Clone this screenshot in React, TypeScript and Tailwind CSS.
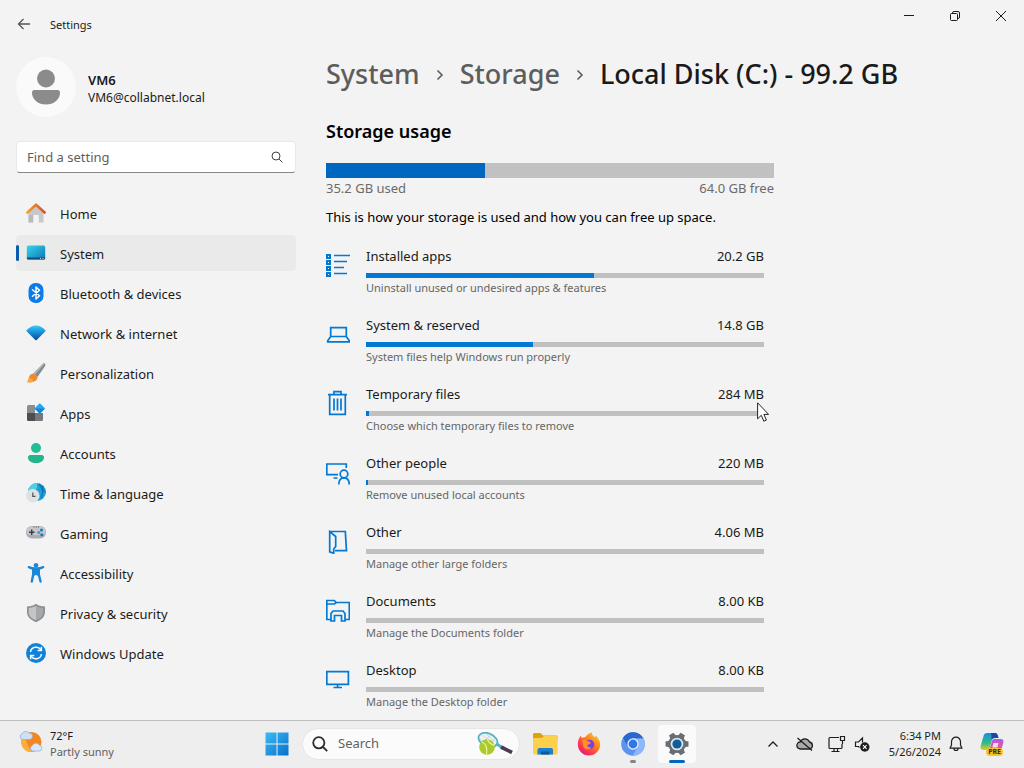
import type { ReactNode } from "react";

const ink = "#0078d4";

function HomeIcon() {
  return (
    <svg viewBox="0 0 20 20" className="size-5">
      <path d="M2.500 9L10 2l7.500 7v10.500h-4.700V12H7.200v7.500H2.500z" fill="#c8c8ca" />
      <path d="M2.500 12h4.700v7.500H2.500z" fill="#b0b0b3" opacity=".6" />
      <path d="M1.400 9.500L10 1.700l8.600 7.800" fill="none" stroke="url(#roof)" strokeWidth="2.600" strokeLinecap="round" strokeLinejoin="round" />
      <defs>
        <linearGradient id="roof"><stop stopColor="#f0a030" /><stop offset="1" stopColor="#d5532a" /></linearGradient>
      </defs>
    </svg>
  );
}
function SystemIcon() {
  return (
    <svg viewBox="0 0 20 20" className="size-5">
      <defs>
        <linearGradient id="scr" x2="1" y2="1"><stop stopColor="#38d5ea" /><stop offset="1" stopColor="#0b76b8" /></linearGradient>
      </defs>
      <rect x=".8" y="2.500" width="18.400" height="14" rx="1.500" fill="url(#scr)" />
      <path d="M.8 14.500h18.400V15a1.500 1.500 0 0 1-1.500 1.500H2.300A1.500 1.500 0 0 1 .8 15z" fill="#0a4f80" />
      <path d="M14 15.500h1M16.500 15.500h1" stroke="#fff" strokeWidth=".8" />
    </svg>
  );
}
function BluetoothIcon() {
  return (
    <svg viewBox="0 0 20 20" className="size-5">
      <rect x="2.500" width="15" height="20" rx="7" fill="#0a7bea" />
      <path d="M6.500 6.800l7 6-3.500 3.200V4l3.500 3.200-7 6" fill="none" stroke="#fff" strokeWidth="1.500" strokeLinejoin="round" strokeLinecap="round" />
    </svg>
  );
}
function NetworkIcon() {
  return (
    <svg viewBox="0 0 20 20" className="size-5">
      <defs>
        <linearGradient id="net" x2="0" y2="1"><stop stopColor="#3ccbf4" /><stop offset=".45" stopColor="#1690dc" /><stop offset="1" stopColor="#0a4a98" /></linearGradient>
      </defs>
      <path d="M.6 6.200C6-.1 14-.1 19.400 6.200c.4.400.3.800 0 1.100L10.700 16c-.5.400-.9.400-1.400 0L.6 7.300c-.3-.3-.4-.7 0-1.100z" transform="translate(0 1)" fill="url(#net)" />
    </svg>
  );
}
function BrushIcon() {
  return (
    <svg viewBox="0 0 20 20" className="size-5">
      <path d="M18.800.6c.9.700.7 1.800.1 2.700L11.500 14 7.300 10.600 16.600 1c.7-.6 1.500-.9 2.200-.4z" fill="#858a90" />
      <path d="M18.800.6L8.800 11.800 7.300 10.600 16.600 1c.7-.6 1.500-.9 2.200-.4z" fill="#b4b8bc" />
      <path d="M7.300 10.600l4.200 3.400c0 4.200-5.300 6.300-10.700 5 1.700-1.300 1.500-2.300 2-4.200.5-2.400 2.300-4 4.500-4.200z" fill="#f08a24" />
      <path d="M3 14c-.3 2-.5 3.500-2.200 5 3 .6 5.500.1 7.300-1z" fill="#f9a842" />
    </svg>
  );
}
function AppsIcon() {
  return (
    <svg viewBox="0 0 20 20" className="size-5">
      <path d="M1 3.500A1.500 1.500 0 0 1 2.500 2H9v8H1z" fill="#8b8e91" />
      <path d="M1 10h8v8H2.500A1.500 1.500 0 0 1 1 16.500z" fill="#4c4e51" />
      <path d="M9 10h8v6.500a1.500 1.500 0 0 1-1.500 1.500H9z" fill="#75797c" />
      <rect x="10" y="1.600" width="7.600" height="7.600" rx="1" transform="rotate(45 13.800 5.400)" fill="#28a8ea" />
      <path d="M13.800 5.400h5.300l-5.300 5.300-5.300-5.300z" fill="#1785d1" />
    </svg>
  );
}
function AccountsIcon() {
  return (
    <svg viewBox="0 0 20 20" className="size-5">
      <circle cx="10" cy="5" r="5" fill="#21bd94" />
      <path d="M4.500 12h11a2.500 2.500 0 0 1 2.500 2.500C18 18 14.500 20 10 20s-8-2-8-5.500A2.500 2.500 0 0 1 4.500 12z" fill="#22b48d" />
    </svg>
  );
}
function TimeIcon() {
  return (
    <svg viewBox="0 0 20 20" className="size-5">
      <circle cx="11" cy="9" r="9" fill="#1f9fd8" />
      <path d="M11 0a9 9 0 0 0-9 8c3 1 5-1 6.500-1S12 5 11 0z" fill="#55cfe0" />
      <path d="M13 1c3 3 5 8 2 14M17 3c-1 3 1 6 2.500 6" fill="none" stroke="#0d72b5" strokeWidth="1.200" />
      <circle cx="6.800" cy="12.800" r="6.800" fill="#dfe2e4" />
      <path d="M6.800 9.500v3.800h2.700" fill="none" stroke="#4d5357" strokeWidth="1.200" />
    </svg>
  );
}
function GamingIcon() {
  return (
    <svg viewBox="0 0 20 20" className="size-5">
      <rect y="3" width="20" height="12.500" rx="6" fill="#a9adb4" />
      <rect x=".5" y="3.500" width="19" height="8.500" rx="4" fill="#c4c7cc" />
      <path d="M3 9.200h5.500M5.700 6.500V12" stroke="#3a3e43" strokeWidth="1.500" />
      <circle cx="15.500" cy="7" r="1.500" fill="#1878b8" /><circle cx="12.800" cy="9.400" r="1.500" fill="#3f97cc" /><circle cx="15.800" cy="11.800" r="1.500" fill="#1878b8" />
      <path d="M7.500 4h1M9.700 4h1M12 4h1" stroke="#53575c" strokeWidth="1" />
    </svg>
  );
}
function AccessIcon() {
  return (
    <svg viewBox="0 0 20 20" className="size-5">
      <circle cx="10" cy="2.300" r="2.300" fill="#1a87d7" />
      <path d="M2.800 4.200L8 6h4l5.200-1.800M10 6v5" fill="none" stroke="#1a87d7" strokeWidth="2.400" strokeLinecap="round" strokeLinejoin="round" />
      <path d="M7.200 5.500h5.600v6L14.600 18.500M7.200 5.500v6L5.800 18.500" fill="none" stroke="#1a87d7" strokeWidth="2.400" strokeLinecap="round" />
      <path d="M7 5h6v8h-1L10 11.500 8 13H7z" fill="#1a87d7" />
    </svg>
  );
}
function ShieldIcon() {
  return (
    <svg viewBox="0 0 20 20" className="size-5">
      <path d="M10 .8c2.500 2 5.300 2.700 9 2.800v5.200c0 5-3.500 8.300-9 10.400-5.500-2.100-9-5.400-9-10.400V3.600C4.700 3.500 7.500 2.800 10 .8z" fill="#8c8f92" />
      <path d="M10 2.800c2.100 1.400 4.500 2 7.300 2.200v4c0 3.900-2.700 6.500-7.300 8.300z" fill="#a5a7aa" />
      <path d="M10 2.800C7.900 4.200 5.500 4.800 2.700 5v4c0 3.900 2.700 6.500 7.300 8.300z" fill="#c3c5c7" />
    </svg>
  );
}
function UpdateIcon() {
  return (
    <svg viewBox="0 0 20 20" className="size-5">
      <circle cx="10" cy="10" r="10" fill="#0d82d8" />
      <path d="M4.500 9a5.700 5.700 0 0 1 10.300-2.400M15.500 11a5.700 5.700 0 0 1-10.300 2.400" fill="none" stroke="#fff" strokeWidth="1.500" />
      <path d="M15.400 3.800v3.700h-3.700M4.600 16.200v-3.700h3.700" fill="none" stroke="#fff" strokeWidth="1.500" />
    </svg>
  );
}

function LineIcon({ children }: { children: ReactNode }) {
  return (
    <svg viewBox="0 0 24 26" className="h-[26px] w-6 shrink-0" fill="none" stroke={ink} strokeWidth="1.700">
      {children}
    </svg>
  );
}

const nav: { label: string; icon: ReactNode }[] = [
  { label: "Home", icon: <HomeIcon /> },
  { label: "System", icon: <SystemIcon /> },
  { label: "Bluetooth & devices", icon: <BluetoothIcon /> },
  { label: "Network & internet", icon: <NetworkIcon /> },
  { label: "Personalization", icon: <BrushIcon /> },
  { label: "Apps", icon: <AppsIcon /> },
  { label: "Accounts", icon: <AccountsIcon /> },
  { label: "Time & language", icon: <TimeIcon /> },
  { label: "Gaming", icon: <GamingIcon /> },
  { label: "Accessibility", icon: <AccessIcon /> },
  { label: "Privacy & security", icon: <ShieldIcon /> },
  { label: "Windows Update", icon: <UpdateIcon /> },
];

const rows: { name: string; size: string; note: string; pct: number; icon: ReactNode; pointer?: boolean }[] = [
  {
    name: "Installed apps", size: "20.2 GB", note: "Uninstall unused or undesired apps & features", pct: 57.4,
    icon: (
      <LineIcon>
        <path d="M1 3h3v3H1zM1 9h3v3H1zM1 15h3v3H1zM1 21h3v3H1z" strokeWidth="2" />
        <path d="M8 3.500h16M8 9.500h13M8 15.500h10M8 21.500h13" />
      </LineIcon>
    ),
  },
  {
    name: "System & reserved", size: "14.8 GB", note: "System files help Windows run properly", pct: 42,
    icon: <LineIcon><path d="M4.700 15.500V6.700h15.600v8.800M4.700 15.500h15.600l3 4.200v1.100H1.700v-1.100z" /></LineIcon>,
  },
  {
    name: "Temporary files", size: "284 MB", note: "Choose which temporary files to remove", pct: 0.75, pointer: true,
    icon: <LineIcon><path d="M2 4.700h19M3.700 4.700v19.600h15.600V4.700M8 4.700V1.700h7v3M8 8.500v12M11.500 8.500v12M15 8.500v12" /></LineIcon>,
  },
  {
    name: "Other people", size: "220 MB", note: "Remove unused local accounts", pct: 0.5,
    icon: <LineIcon><path d="M12 15.700H.8V5h19.500v4M7.500 19h4" /><circle cx="18" cy="15" r="3.800" /><path d="M12.800 25.500c0-4.200 2.200-6.700 5.200-6.700s5.200 2.500 5.200 6.700" /></LineIcon>,
  },
  {
    name: "Other", size: "4.06 MB", note: "Manage other large folders", pct: 0,
    icon: <LineIcon><path d="M3.700 3.500h15.600l1.200 19.200H9M3.700 3.500v20.300l4 1.500v-4.200l2-2.600V8.500z" /></LineIcon>,
  },
  {
    name: "Documents", size: "8.00 KB", note: "Manage the Documents folder", pct: 0,
    icon: <LineIcon><path d="M5 22.500H.8V3.500h7.500l2 2h13v17H19M.8 7h7.500l2-1.500" /><path d="M5 24v-7.500l2-2.500h10l2 2.500V24h-3.500v-5.500h-7V24z" /></LineIcon>,
  },
  {
    name: "Desktop", size: "8.00 KB", note: "Manage the Desktop folder", pct: 0,
    icon: <LineIcon><path d="M.8 5.700h21.600v12.600H.8zM11.600 18.300v3.200M7.500 21.500h8.500" /></LineIcon>,
  },
];

function Crumb() {
  return (
    <svg viewBox="0 0 8 12" className="mt-0.5 h-3 w-2" fill="none" stroke="#5d5d5d" strokeWidth="1.600" aria-hidden="true">
      <path d="M1.500 1.500L6 6l-4.500 4.500" />
    </svg>
  );
}

function Pointer() {
  return (
    <svg viewBox="0 0 12 20" className="absolute -right-[5px] top-[18px] h-5 w-3" aria-hidden="true">
      <path d="M.6.800v16l3.700-3.500 2.500 5.900 2.600-1.100-2.500-5.700h4.700z" fill="#fff" stroke="#222" strokeWidth="1" />
    </svg>
  );
}

function Sidebar() {
  return (
    <aside className="w-[280px] shrink-0">
      <div className="flex items-center gap-3 pt-[9px]">
        <div className="flex size-[60px] items-center justify-center rounded-full bg-[#fafafa]">
          <svg viewBox="0 0 30 36" className="h-9 w-[30px]" fill="#8b8b8b">
            <circle cx="15" cy="9.500" r="9" />
            <path d="M3.500 21h23a2.500 2.500 0 0 1 2.500 2.500C29 31 22.500 35.500 15 35.500S1 31 1 23.500A2.500 2.500 0 0 1 3.500 21z" />
          </svg>
        </div>
        <div className="pt-0.5">
          <div className="text-[13px] leading-5 font-semibold text-[#1a1a1a]">VM6</div>
          <div className="text-xs leading-4 text-[#1a1a1a]">VM6@collabnet.local</div>
        </div>
      </div>
      <label className="mt-6 flex h-8 items-center rounded border border-[#e9e9e9] border-b-[#868686] bg-white px-2.5">
        <input type="text" aria-label="Find a setting" placeholder="Find a setting" className="min-w-0 flex-1 bg-transparent text-[13px] leading-5 outline-none placeholder:text-[#5f5f5f]" />
        <svg viewBox="0 0 12 12" className="mr-0.5 size-3" fill="none" stroke="#444" strokeWidth="1">
          <circle cx="5" cy="5" r="4" /><path d="M8 8l3.500 3.500" />
        </svg>
      </label>
      <nav className="mt-[22px] flex flex-col gap-1">
        {nav.map((n) => {
          const on = n.label === "System";
          return (
            <a key={n.label} href="#" aria-current={on ? "page" : undefined} className={on ? "flex h-9 items-center rounded bg-[#eaeaea] text-[13px] text-[#1b1b1b]" : "flex h-9 items-center rounded text-[13px] text-[#1b1b1b]"}>
              <span className={on ? "h-4 w-[3px] rounded-full bg-[#0a5cad]" : "h-4 w-[3px]"} />
              <span className="ml-[7px] mr-3.5">{n.icon}</span>
              <span className="pt-[3px]">{n.label}</span>
            </a>
          );
        })}
      </nav>
    </aside>
  );
}

function Storage() {
  return (
    <main className="min-w-0 flex-1 pt-2 pb-2.5">
      <h1 className="flex items-center gap-4 text-[27px] leading-9 font-medium whitespace-nowrap text-[#1a1a1a]">
        <a href="#" className="text-[#5d5d5d]">System</a>
        <Crumb />
        <a href="#" className="text-[#5d5d5d]">Storage</a>
        <Crumb />
        <span>Local Disk (C:) - 99.2 GB</span>
      </h1>
      <h2 className="mt-[25px] text-lg leading-7 font-semibold text-black">Storage usage</h2>
      <div className="mt-[18px] max-w-[448px]">
        <div role="progressbar" aria-label="Disk used" aria-valuenow={35} className="h-[15px] bg-[#c1c1c1]">
          <div className="h-full bg-[#0067c0]" style={{ width: "35.500%" }} />
        </div>
        <div className="flex justify-between text-[13px] leading-5 text-[#6b6b6b]">
          <span>35.2 GB used</span>
          <span>64.0 GB free</span>
        </div>
      </div>
      <p className="mt-[9px] text-[13px] leading-5 text-black">This is how your storage is used and how you can free up space.</p>
      <ul className="mt-[19px] flex max-w-[438px] flex-col gap-[19px]">
        {rows.map((r) => (
          <li key={r.name}>
            <a href="#" className="flex gap-4">
              <span className="pt-1.5">{r.icon}</span>
              <span className="relative flex min-w-0 flex-1 flex-col">
                <span className="flex justify-between text-[13px] leading-5 text-[#1a1a1a]">
                  <span>{r.name}</span>
                  <span>{r.size}</span>
                </span>
                <span role="progressbar" aria-label={r.name} aria-valuenow={r.pct} className="mt-[7px] block h-[5px] bg-[#c0c0c0]">
                  <span className="block h-full bg-[#0078d4]" style={{ width: `${r.pct}%` }} />
                </span>
                <span className="mt-0.5 text-[11px] leading-4 text-[#666]">{r.note}</span>
                {r.pointer && <Pointer />}
              </span>
            </a>
          </li>
        ))}
      </ul>
    </main>
  );
}

const task = "flex h-[38px] w-[38px] shrink-0 items-center justify-center rounded";
const tray = "flex h-9 w-8 shrink-0 items-center justify-center";

function Taskbar() {
  return (
    <footer className="flex h-12 shrink-0 items-center border-t border-[#bdbdbd] bg-[#eeeeee] pr-[11px] pb-px">
      <button className="flex w-[258px] shrink-0 items-center gap-[7px] pl-[19px] text-left">
        <svg viewBox="0 0 24 24" className="mb-1 size-6">
          <circle cx="12.500" cy="12" r="10" fill="#f5861e" />
          <path d="M5 5a10 10 0 0 0 8 17c-3-4-6-11-8-17z" fill="#fbae3c" />
          <path d="M3.500 9.500a3 3 0 0 1-.3-5.800A4 4 0 0 1 10 3a3.300 3.300 0 0 1 1 6.500z" fill="#cfe0f6" stroke="#8fb0de" strokeWidth=".8" />
          <path d="M13.500 21a3 3 0 0 1-.2-5.600 4 4 0 0 1 7-.4 3.100 3.100 0 0 1 .4 6z" fill="#dce7f8" stroke="#8fb0de" strokeWidth=".8" />
        </svg>
        <span className="text-[11px] leading-4 text-[#1a1a1a]">
          <span className="block">72°F</span>
          <span className="block text-[#5f5f5f]">Partly sunny</span>
        </span>
      </button>
      <div className="flex shrink-0 items-center gap-1.5">
        <button aria-label="Start" className={task}>
          <svg viewBox="0 0 24 24" className="size-6">
            <defs><linearGradient id="win" x2="1" y2="1"><stop stopColor="#3bbcf5" /><stop offset="1" stopColor="#0670cc" /></linearGradient></defs>
            <path d="M.5.500h11v11H.5zM12.500.500h11v11h-11zM.5 12.500h11v11H.5zM12.500 12.500h11v11h-11z" fill="url(#win)" />
          </svg>
        </button>
        <label className="flex h-8 w-[218px] items-center rounded-full border border-[#e6e6e6] bg-[#fbfbfb] pr-1.5 pl-[9px]">
          <svg viewBox="0 0 16 16" className="size-4 shrink-0" fill="none" stroke="#2c2c2c" strokeWidth="1.800">
            <circle cx="6.800" cy="6.800" r="5.600" /><path d="M11 11l4.200 4.200" />
          </svg>
          <input type="text" aria-label="Search" placeholder="Search" className="ml-2.5 min-w-0 flex-1 bg-transparent text-[13px] outline-none placeholder:text-[#5f5f5f]" />
          <svg viewBox="0 0 36 24" className="h-6 w-9 shrink-0">
            <ellipse cx="11" cy="8" rx="10" ry="6.500" transform="rotate(25 11 8)" fill="#eef3f6" stroke="#55b3c8" strokeWidth="1.800" />
            <path d="M4 2l12 10M8 1l10 9M2 6l10 8M14 2L5 12M18 6l-6 8" stroke="#b9c4cc" strokeWidth=".6" />
            <path d="M19 11.500l6 4" stroke="#55b3c8" strokeWidth="3" />
            <path d="M24 15l11 5.500" stroke="#4c3a55" strokeWidth="3.800" />
            <circle cx="10" cy="15" r="7.800" fill="#aacb2a" />
            <path d="M4.500 10c4 1 6 5 5 12.500M10.500 7.500c1 3 4 5 7 6" fill="none" stroke="#e6f2a8" strokeWidth="1.200" />
          </svg>
        </label>
        <button aria-label="File Explorer" className={task}>
          <svg viewBox="0 0 26 24" className="h-6 w-[26px]">
            <path d="M1 2.500C1 1.700 1.600 1 2.500 1h6L11 3.500h13c.800 0 1.500.600 1.500 1.400V9H1z" fill="#e0a010" />
            <path d="M1 6h9l2-2h12c.800 0 1.500.600 1.500 1.500V21c0 .800-.700 1.500-1.500 1.500H2.500C1.700 22.500 1 21.800 1 21z" fill="#fcd04c" />
            <path d="M5.500 22.500V18c0-1.100.9-2 2-2h11.500c1.100 0 2 .9 2 2v4.500z" fill="#1a80d0" />
            <path d="M9 22.500v-3h8.500v3z" fill="#0b5a9c" />
          </svg>
        </button>
        <button aria-label="Firefox" className={task}>
          <svg viewBox="0 0 24 24" className="size-6">
            <defs><linearGradient id="fox" x1="1" x2=".2" y2="1"><stop stopColor="#ffe23c" /><stop offset=".4" stopColor="#ff8a1c" /><stop offset=".75" stopColor="#fa3a50" /><stop offset="1" stopColor="#e31587" /></linearGradient></defs>
            <path d="M12 23.500A11.200 11.200 0 0 1 .8 12.300C.8 8.500 2 5.500 4 3.500c0 1.200.3 2 .8 2.500 1-.7 2.300-1 3.500-.8C10 2.500 12 1 15 .5c-.3 2.500 1 3.500 3 4.700l.500-1.700c3 2.500 4.700 5.500 4.700 9A11.200 11.200 0 0 1 12 23.500z" fill="url(#fox)" />
            <circle cx="12.500" cy="12.500" r="4.800" fill="#7a3fe0" />
            <path d="M5 8c2.500-1.500 5 0 6.500 1.500 1.200.2 2.500.5 2 1.700-.8 1.300-2.700.8-3 2.300 0 1.500 2 2.500 4 1.700-2 3.500-8 3-8.500-2.200-.2-2-.5-3.500-1-5z" fill="#ff8f26" />
          </svg>
        </button>
        <button aria-label="Chromium" className="relative flex h-[38px] w-[38px] shrink-0 items-center justify-center">
          <svg viewBox="0 0 24 24" className="size-6">
            <circle cx="12" cy="12" r="11.800" fill="#5a94ee" />
            <path d="M12 6.500h10.500A11.800 11.800 0 0 0 2 5.800l5 9z" fill="#2a68d0" />
            <path d="M17 14.500L11.500 23.800A11.800 11.800 0 0 0 22.600 6.500H12z" fill="#8db8f8" />
            <circle cx="12" cy="12" r="5.700" fill="#e8f1fe" /><circle cx="12" cy="12" r="4.400" fill="#2f78e4" />
          </svg>
          <span className="absolute bottom-0 h-[3px] w-1.5 rounded-full bg-[#858585]" />
        </button>
        <button aria-label="Settings" className="relative flex h-[38px] w-[38px] shrink-0 items-center justify-center rounded bg-[#fafafa]">
          <svg viewBox="0 0 24 24" className="size-6">
            <g fill="#6a6e72">
              <circle cx="12" cy="12" r="9" />
              <path d="M9.500.5h5l1 5h-7zM9.500 23.500h5l1-5h-7z" transform="rotate(30 12 12)" />
              <path d="M9.500.5h5l1 5h-7zM9.500 23.500h5l1-5h-7z" transform="rotate(90 12 12)" />
              <path d="M9.500.5h5l1 5h-7zM9.500 23.500h5l1-5h-7z" transform="rotate(150 12 12)" />
            </g>
            <circle cx="12" cy="12" r="6.300" fill="#dce7ef" /><circle cx="12" cy="12" r="4.600" fill="#0d5f9e" />
          </svg>
          <span className="absolute bottom-0 h-[3px] w-4 rounded-full bg-[#0067c0]" />
        </button>
      </div>
      <div className="ml-auto flex shrink-0 items-center text-[#1f1f1f]">
        <button aria-label="Show hidden icons" className={tray}>
          <svg viewBox="0 0 12 8" className="h-2 w-3" fill="none" stroke="currentColor" strokeWidth="1.300"><path d="M1.500 6.500L6 2l4.500 4.500" /></svg>
        </button>
        <button aria-label="OneDrive" className={tray}>
          <svg viewBox="0 0 18 16" className="h-4 w-[18px]" stroke="currentColor" strokeWidth="1.300">
            <path d="M4.500 13a3.500 3.500 0 0 1-.3-7 5 5 0 0 1 9.300 0 3.600 3.600 0 0 1 .3 7z" fill="#a9a9a9" />
            <path d="M1.500 2l14.500 12.500" fill="none" />
          </svg>
        </button>
        <button aria-label="Network" className={tray}>
          <svg viewBox="0 0 18 18" className="size-[18px]" fill="none" stroke="currentColor" strokeWidth="1.200">
            <path d="M11 2.500H2c-.600 0-1 .4-1 1v9c0 .6.4 1 1 1h11c.600 0 1-.4 1-1V9M6 13.500v3M9.500 13.500v3M3.500 16.500h8" /><path d="M12.500 1.500h4v4h-4zM14.500 5.500V9" />
          </svg>
        </button>
        <button aria-label="Volume muted" className="flex h-9 w-[18px] shrink-0 items-center justify-center">
          <svg viewBox="0 0 16 16" className="size-4" fill="none" stroke="currentColor" strokeWidth="1.200">
            <path d="M5.500 11.500L4.500 10.500H1.500V6h3L8.500 2v4.500" />
            <circle cx="10.800" cy="11" r="4.700" fill="currentColor" stroke="none" /><path d="M9 9.200l3.600 3.600M12.600 9.200L9 12.800" stroke="#fff" strokeWidth="1.100" />
          </svg>
        </button>
        <button className="w-[70px] text-right text-[11px] leading-4">
          <span className="block">6:34 PM</span>
          <span className="block">5/26/2024</span>
        </button>
        <button aria-label="Notifications" className="flex h-9 w-[30px] shrink-0 items-center justify-center">
          <svg viewBox="0 0 14 16" className="h-4 w-3.5" fill="none" stroke="currentColor" strokeWidth="1.200">
            <path d="M7 1.200a4.500 4.500 0 0 0-4.500 4.500V9L1 12.200h12L11.500 9V5.700A4.500 4.500 0 0 0 7 1.200zM5 12.500a2 2 0 0 0 4 0" strokeLinejoin="round" />
          </svg>
        </button>
        <button aria-label="Copilot" className="relative flex h-9 w-[42px] shrink-0 items-center justify-center">
          <svg viewBox="0 0 24 24" className="size-6">
            <defs>
              <linearGradient id="cpa" x2="0" y2="1"><stop stopColor="#1a8fe0" /><stop offset=".6" stopColor="#35bb85" /><stop offset="1" stopColor="#e5cf20" /></linearGradient>
              <linearGradient id="cpb" x2="0" y2="1"><stop stopColor="#a75cf0" /><stop offset=".6" stopColor="#f0568c" /><stop offset="1" stopColor="#f98d3c" /></linearGradient>
            </defs>
            <path d="M7 1h8c1.500 0 2.300 1 2.800 2.500l.7 2.500h-4c-1.500 0-2.300.9-2.700 2.300l-2 7C9.300 16.800 8.500 18 7 18H3.500C1 18 0 16.300.7 13.800L3.700 3.500C4.200 2 5.200 1 7 1z" fill="url(#cpa)" />
            <path d="M11 1h4c1.500 0 2.300 1 2.800 2.500l.7 2.500h-4c-1.500 0-2.300.9-2.700 2.300z" fill="#1849a8" />
            <path d="M14.500 7h6c2.500 0 3.500 1.500 2.800 4l-2.500 8c-.5 1.700-1.500 3-3.300 3H10c-1.500 0-1.500-1-1.200-2l3-10.500C12.200 8 13 7 14.500 7z" fill="url(#cpb)" />
            <path d="M13.500 11h5l-1.200 4.500h-5z" fill="#f3d8f6" />
          </svg>
          <span className="absolute right-2.5 bottom-1.5 rounded-sm bg-[#fbc02d] px-0.5 text-[7px] leading-[8px] font-bold text-[#3a2a00]">PRE</span>
        </button>
      </div>
    </footer>
  );
}

export default function App() {
  return (
    <div className="flex min-h-screen flex-col bg-[#f3f3f3] font-['Noto_Sans','Open_Sans',sans-serif]">
      <header className="flex h-12 items-start justify-between">
        <div className="flex h-12 items-center pl-4">
          <button aria-label="Back" className="flex size-4 items-center justify-center">
            <svg viewBox="0 0 14 12" className="h-3 w-3.5" fill="none" stroke="#555" strokeWidth="1.300"><path d="M13 6H1.500M6.500 1l-5 5 5 5" /></svg>
          </button>
          <span className="ml-[18px] pt-0.5 text-[11px] text-[#1a1a1a]">Settings</span>
        </div>
        <div className="flex text-[#1a1a1a]">
          <button aria-label="Minimize" className="flex h-8 w-[46px] items-center justify-center"><svg viewBox="0 0 10 10" className="size-2.5" stroke="currentColor"><path d="M0 4.500h10" /></svg></button>
          <button aria-label="Restore" className="flex h-8 w-[46px] items-center justify-center"><svg viewBox="0 0 10 10" className="size-2.5" fill="none" stroke="currentColor"><rect x=".5" y="2.500" width="7" height="7" rx="1" /><path d="M2.500 2.500v-.5A1.500 1.500 0 0 1 4 .5h4A1.500 1.500 0 0 1 9.500 2v4A1.500 1.500 0 0 1 8 7.500h-.5" /></svg></button>
          <button aria-label="Close" className="flex h-8 w-[46px] items-center justify-center"><svg viewBox="0 0 10 10" className="size-2.5" stroke="currentColor"><path d="M0 0l10 10M10 0L0 10" /></svg></button>
        </div>
      </header>
      <div className="flex flex-1 gap-[30px] pl-4">
        <Sidebar />
        <Storage />
      </div>
      <Taskbar />
    </div>
  );
}
